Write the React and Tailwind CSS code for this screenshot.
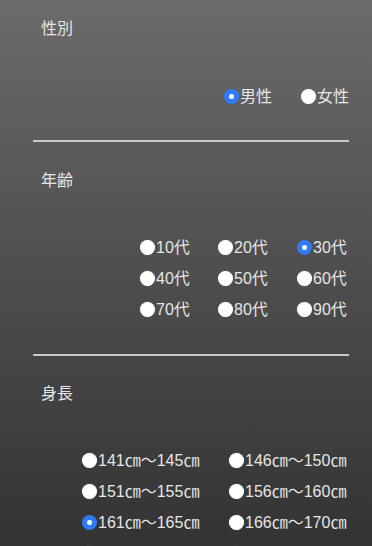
import React, { useState } from 'react'

const font = { fontFamily: '"Liberation Sans", "Noto Sans CJK JP", sans-serif' }

const ages = ['10代', '20代', '30代', '40代', '50代', '60代', '70代', '80代', '90代']
const heights = [
  '141㎝〜145㎝', '146㎝〜150㎝',
  '151㎝〜155㎝', '156㎝〜160㎝',
  '161㎝〜165㎝', '166㎝〜170㎝',
  '171㎝〜175㎝', '176㎝〜180㎝'
]

function Radio({ checked, label, onClick, className = '' }) {
  return (
    <button onClick={onClick} className={`flex h-[31px] items-center gap-[1px] text-[16px] leading-none text-[#e6e6e6] ${className}`}>
      {checked ? (
        <span className="flex h-[15px] w-[15px] items-center justify-center rounded-full bg-[#2f7bf5]">
          <span className="h-[5px] w-[5px] rounded-full bg-white" />
        </span>
      ) : (
        <span className="h-[15px] w-[15px] rounded-full bg-white shadow-[0_0_1px_#999]" />
      )}
      <span>{label}</span>
    </button>
  )
}

function Divider() {
  return <div className="ml-[33px] mr-[23px] h-[2px] bg-[#c9c9c9]" />
}

function Label({ children, className = '' }) {
  return <div className={`pl-[41px] text-[16px] leading-[18px] text-[#e6e6e6] ${className}`}>{children}</div>
}

export default function App() {
  const [gender, setGender] = useState('男性')
  const [age, setAge] = useState('30代')
  const [height, setHeight] = useState('161㎝〜165㎝')

  return (
    <div style={font} className="h-[546px] overflow-hidden bg-gradient-to-b from-[#6b6b6b] to-[#333333]">
      <Label className="pt-[20px]">性別</Label>
      <div className="mt-[43px] mb-[28px] flex justify-end gap-[29px] pr-[23px]">
        {['男性', '女性'].map(g => (
          <Radio key={g} checked={gender === g} label={g} onClick={() => setGender(g)} />
        ))}
      </div>
      <Divider />

      <Label className="mt-[30px]">年齢</Label>
      <div className="mt-[42px] mb-[29px] grid grid-cols-[78px_79px_52px] justify-end pr-[23px]">
        {ages.map(a => (
          <Radio key={a} checked={age === a} label={a} onClick={() => setAge(a)} />
        ))}
      </div>
      <Divider />

      <Label className="mt-[29px]">身長</Label>
      <div className="mt-[42px] grid grid-cols-[147px_120px] justify-end pr-[23px]">
        {heights.map(h => (
          <Radio key={h} checked={height === h} label={h} onClick={() => setHeight(h)} />
        ))}
      </div>
    </div>
  )
}
